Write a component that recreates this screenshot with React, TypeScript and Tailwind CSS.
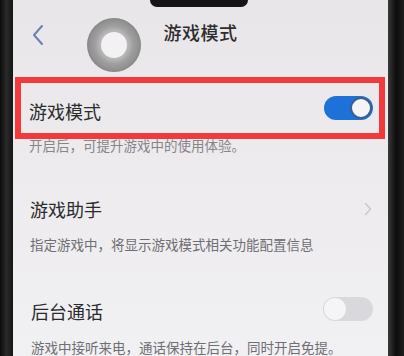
import React from 'react';

function Toggle({ on }: { on: boolean }): React.JSX.Element {
  return on ? (
    <div className="w-[49px] h-[24px] rounded-full bg-[#1c72d8] flex items-center justify-end pr-[1px]">
      <div className="w-[22px] h-[22px] rounded-full bg-[#f4f3f6] border-2 border-[#3d5f8c]" />
    </div>
  ) : (
    <div className="w-[50px] h-[24px] rounded-full bg-[#d9d8dc] flex items-center pl-[1px]">
      <div className="w-[22px] h-[22px] rounded-full bg-[#f5f4f7]" />
    </div>
  );
}

export default function App(): React.JSX.Element {
  const cjk = { fontFamily: '"Noto Sans CJK SC", "Noto Sans", sans-serif' };

  return (
    <div className="w-[404px] h-[356px] flex bg-[#111] overflow-hidden" style={cjk}>
      {/* Left bezel */}
      <div className="w-[13px] h-full bg-gradient-to-r from-[#0c0c0c] via-[#2a2a2a] to-[#151515]" />

      {/* Screen */}
      <div className="relative flex-1 h-full flex flex-col bg-gradient-to-b from-[#e9e6e9] to-[#f1f0f3]">
        {/* Notch */}
        <div className="absolute left-[137px] top-0 w-[98px] h-[7px] bg-[#151515] rounded-b-[8px]" />

        {/* Floating assistive button */}
        <div className="absolute z-20 left-[74px] top-[18px] w-[54px] h-[54px] rounded-full bg-[#9b9b9b] shadow-[inset_0_0_6px_rgba(0,0,0,0.25)] flex items-center justify-center">
          <div className="w-[34px] h-[34px] rounded-full bg-[#b9b9b9] blur-[2px]" />
          <div className="absolute w-[26px] h-[26px] rounded-full bg-[#f3f1f3] blur-[0.6px]" />
        </div>

        {/* Header */}
        <div className="relative h-[77px] flex items-center justify-center shrink-0">
          <svg
            className="absolute left-[18px] top-[24px]"
            width="14"
            height="22"
            viewBox="0 0 14 22"
            fill="none"
          >
            <path d="M11 2 L3 11 L11 20" stroke="#6c7fae" strokeWidth="2" strokeLinecap="round" strokeLinejoin="round" />
          </svg>
          <h1 className="text-[18px] font-medium text-[#2e2e30] -mt-[12px] tracking-[0.5px]">游戏模式</h1>
        </div>

        {/* Highlighted row */}
        <div className="relative z-10 ml-[2px] mr-[3px] h-[62px] shrink-0 border-[6px] border-[#f23a3c] flex items-center justify-between pl-[8px] pr-[6px]">
          <span className="text-[18px] text-[#2b2b2d] mt-[6px]">游戏模式</span>
          <Toggle on />
        </div>
        <p className="-mt-[3px] pl-[16px] text-[13.5px] leading-[18px] text-[#86858a]">
          开启后，可提升游戏中的使用体验。
        </p>

        {/* Game assistant */}
        <div className="mt-[35px] h-[40px] shrink-0 flex items-center justify-between pl-[17px] pr-[16px]">
          <span className="text-[18px] text-[#2b2b2d]">游戏助手</span>
          <svg width="8" height="14" viewBox="0 0 8 14" fill="none">
            <path d="M1.5 1.5 L6.5 7 L1.5 12.5" stroke="#c9c8cc" strokeWidth="1.5" strokeLinecap="round" strokeLinejoin="round" />
          </svg>
        </div>
        <p className="mt-[6px] pl-[17px] text-[13.5px] leading-[18px] text-[#6f6e73]">
          指定游戏中，将显示游戏模式相关功能配置信息
        </p>

        {/* Background call */}
        <div className="mt-[36px] h-[40px] shrink-0 flex items-center justify-between pl-[18px] pr-[15px]">
          <span className="text-[18px] text-[#2b2b2d] mt-[4px]">后台通话</span>
          <Toggle on={false} />
        </div>
        <p className="mt-[9px] pl-[18px] text-[13.5px] leading-[18px] text-[#6f6e73]">
          游戏中接听来电，通话保持在后台，同时开启免提。
        </p>
      </div>

      {/* Right bezel */}
      <div className="w-[16px] h-full bg-gradient-to-r from-[#3a3a3a] via-[#0d0d0d] to-[#1e1e1e]" />
    </div>
  );
}
